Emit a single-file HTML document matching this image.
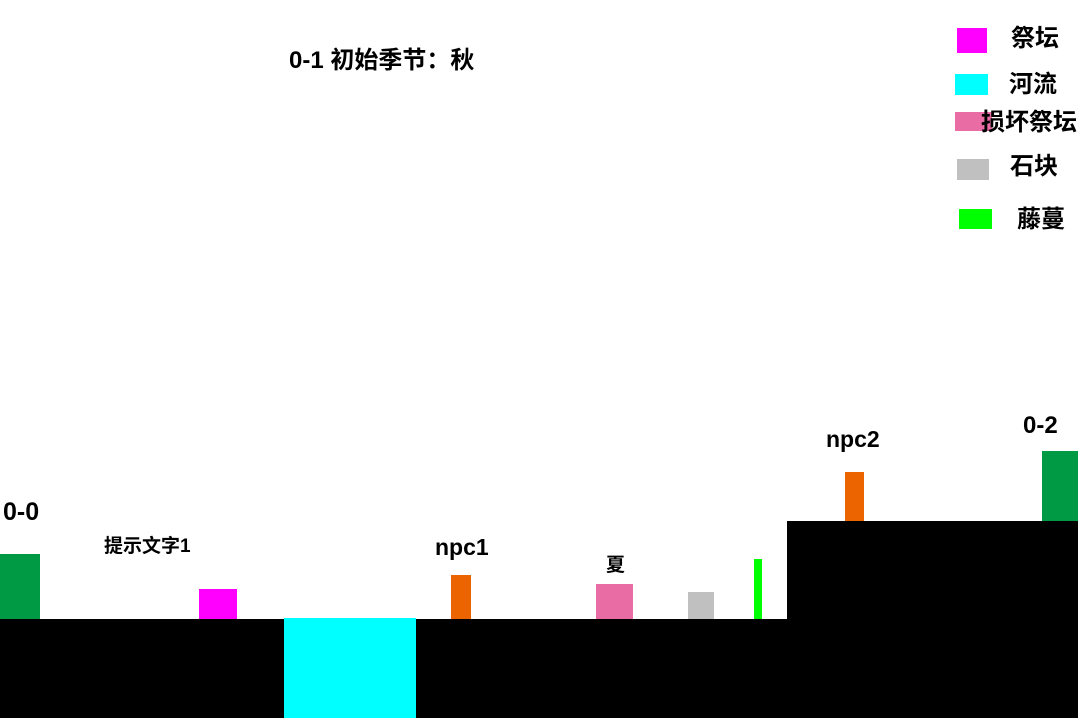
<!DOCTYPE html>
<html><head><meta charset="utf-8"><style>
body{margin:0;width:1078px;height:718px;background:#fff;position:relative;overflow:hidden;font-family:"Liberation Sans","Noto Sans CJK SC",sans-serif;font-weight:bold;color:#000}
div{position:absolute}
.t{white-space:nowrap;line-height:1}
</style></head><body>
<div class="t" style="left:289px;top:49px;font-size:24px">0-1 初始季节：秋</div>

<div style="left:957px;top:28px;width:30px;height:25px;background:#ff00ff"></div>
<div class="t" style="left:1011px;top:27px;font-size:24px">祭坛</div>
<div style="left:955px;top:74px;width:33px;height:21px;background:#00ffff"></div>
<div class="t" style="left:1009px;top:73px;font-size:24px">河流</div>
<div style="left:955px;top:112px;width:37px;height:19px;background:#e96ca4"></div>
<div class="t" style="left:981px;top:111px;font-size:24px">损坏祭坛</div>
<div style="left:957px;top:159px;width:32px;height:21px;background:#c0c0c0"></div>
<div class="t" style="left:1010px;top:155px;font-size:24px">石块</div>
<div style="left:959px;top:209px;width:33px;height:20px;background:#00ff00"></div>
<div class="t" style="left:1017px;top:208px;font-size:24px">藤蔓</div>

<div style="left:0;top:619px;width:1078px;height:99px;background:#000"></div>
<div style="left:787px;top:521px;width:291px;height:98px;background:#000"></div>
<div style="left:284px;top:618px;width:132px;height:100px;background:#00ffff"></div>

<div style="left:0;top:554px;width:40px;height:65px;background:#009a44"></div>
<div class="t" style="left:3px;top:500px;font-size:25px">0-0</div>
<div class="t" style="left:104px;top:537px;font-size:19px">提示文字1</div>
<div style="left:199px;top:589px;width:38px;height:30px;background:#ff00ff"></div>
<div style="left:451px;top:575px;width:20px;height:44px;background:#eb6400"></div>
<div class="t" style="left:435px;top:536px;font-size:23px">npc1</div>
<div style="left:596px;top:584px;width:37px;height:35px;background:#e96ca4"></div>
<div class="t" style="left:606px;top:556px;font-size:19px">夏</div>
<div style="left:688px;top:592px;width:26px;height:27px;background:#c0c0c0"></div>
<div style="left:754px;top:559px;width:8px;height:60px;background:#00ff00"></div>
<div style="left:845px;top:472px;width:19px;height:49px;background:#eb6400"></div>
<div class="t" style="left:826px;top:428px;font-size:23px">npc2</div>
<div style="left:1042px;top:451px;width:36px;height:70px;background:#009a44"></div>
<div class="t" style="left:1023px;top:414px;font-size:24px">0-2</div>
</body></html>
